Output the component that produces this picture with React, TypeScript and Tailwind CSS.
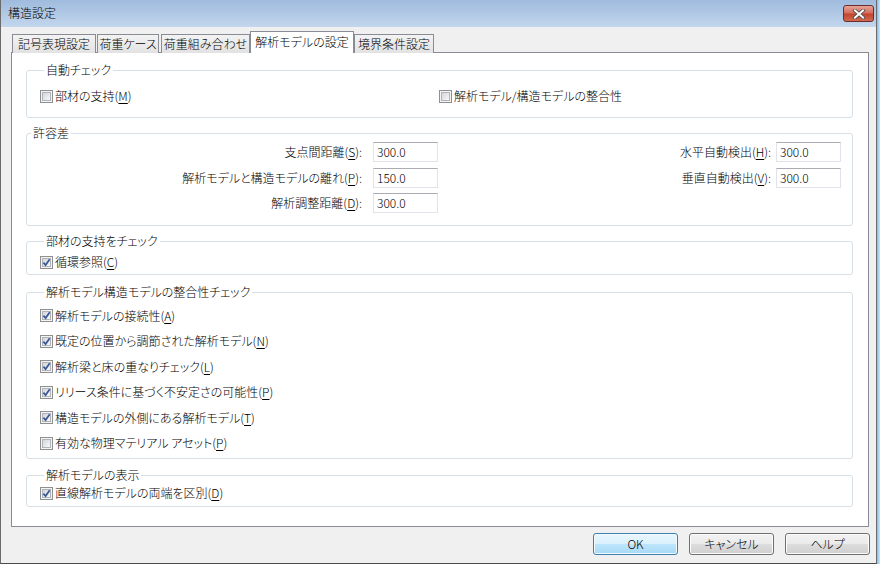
import type { ReactNode } from 'react';

function CheckBox({ checked }: { checked?: boolean }) {
  return (
    <span className="flex h-[13px] w-[13px] shrink-0 items-center justify-center border border-[#8e8f8f] bg-[#f4f4f4] p-px">
      <span className="relative flex h-full w-full border border-[#b0b4ba] bg-gradient-to-br from-[#d3d6da] to-[#f8f8f8]">
        {checked && (
          <svg viewBox="0 0 9 9" className="absolute -left-px -top-px h-[9px] w-[9px]">
            <path d="M1.4 4.6 L3.6 7.1 L7.7 1.3" fill="none" stroke="#3a5894" strokeWidth="1.7" />
          </svg>
        )}
      </span>
    </span>
  );
}

function K({ c }: { c: string }) {
  return <span className="underline underline-offset-[2px]">{c}</span>;
}

function Check({ checked, children }: { checked?: boolean; children: ReactNode }) {
  return (
    <div className="flex h-[16px] items-center gap-[2px]">
      <CheckBox checked={checked} />
      <span className="leading-[16px]">{children}</span>
    </div>
  );
}

function Group({ title, className, children }: { title: string; className: string; children: ReactNode }) {
  return (
    <fieldset className={`min-w-0 rounded-[3px] border border-[#d5dfe5] ${className}`}>
      <legend className="ml-[4px] px-[2px] leading-[14px]">{title}</legend>
      {children}
    </fieldset>
  );
}

function Field({ value }: { value: string }) {
  return (
    <div className="flex h-[20px] w-[65px] items-center border border-[#e2e3ea] border-t-[#abadb3] bg-white pl-[3px] leading-none">
      {value}
    </div>
  );
}

function Button({ primary, children }: { primary?: boolean; children: ReactNode }) {
  return (
    <div
      className={
        primary
          ? 'h-[22px] w-[85px] rounded-[3px] border border-[#3c7fb1] bg-[linear-gradient(#eaf6fd_0%,#d9f0fc_50%,#bee6fd_50%,#a7d9f5_100%)] text-center leading-[20px] shadow-[inset_0_0_0_1px_#f4fbff]'
          : 'h-[22px] w-[85px] rounded-[3px] border border-[#707070] bg-[linear-gradient(#f2f2f2_0%,#ebebeb_50%,#dddddd_50%,#cfcfcf_100%)] text-center leading-[20px] shadow-[inset_0_0_0_1px_#fcfcfc]'
      }
    >
      {children}
    </div>
  );
}

const tabs = [
  { name: '記号表現設定', w: 'ml-[11px] w-[84px]' },
  { name: '荷重ケース', w: 'ml-[1px] w-[62px]' },
  { name: '荷重組み合わせ', w: 'ml-[2px] w-[89px]' },
  { name: '解析モデルの設定', w: 'w-[104px]', active: true },
  { name: '境界条件設定', w: 'w-[80px]' },
];

const integrity = [
  { label: '解析モデルの接続性', key: 'A', checked: true },
  { label: '既定の位置から調節された解析モデル', key: 'N', checked: true },
  { label: '解析梁と床の重なりチェック', key: 'L', checked: true },
  { label: 'リリース条件に基づく不安定さの可能性', key: 'P', checked: true },
  { label: '構造モデルの外側にある解析モデル', key: 'T', checked: true },
  { label: '有効な物理マテリアル アセット', key: 'P', checked: false },
];

export default function App() {
  return (
    <div className="flex h-[564px] w-[880px] font-['Noto_Sans_CJK_JP',sans-serif] text-[12px] font-light text-black [font-feature-settings:'palt']">
      <div className="flex w-[877px] flex-col border-x border-b border-x-[#6b6b6b] border-b-[#4a4a4a] bg-[#f0f0f0]">
        {/* title bar */}
        <div className="flex h-[27px] shrink-0 items-start justify-between bg-gradient-to-b from-[#9fbbdd] to-[#c3d6ed]">
          <span className="pl-[7px] pt-[5px] leading-[16px]">構造設定</span>
          <div className="mr-[2px] mt-[5px] flex h-[17px] w-[31px] items-center justify-center rounded-[3px] border border-[#6e2b2b] bg-[linear-gradient(#e8a497_0%,#d3705f_45%,#c2452f_55%,#cf6a50_100%)]">
            <svg viewBox="0 0 14 10" className="h-[10px] w-[14px]">
              <path d="M3 1.5 L11 8.5 M11 1.5 L3 8.5" stroke="#4a4a4a" strokeWidth="3.6" strokeLinecap="square" />
              <path d="M3 1.5 L11 8.5 M11 1.5 L3 8.5" stroke="#ffffff" strokeWidth="2" strokeLinecap="square" />
            </svg>
          </div>
        </div>

        {/* tabs */}
        <div className="relative z-10 mt-[4px] -mb-px flex h-[22px] shrink-0 items-end">
          {tabs.map((t) =>
            t.active ? (
              <div
                key={t.name}
                className={`${t.w} h-[22px] border border-b-0 border-[#898c95] bg-white text-center leading-[19px]`}
              >
                {t.name}
              </div>
            ) : (
              <div
                key={t.name}
                className={`${t.w} h-[19px] border border-b-0 border-[#898c95] bg-gradient-to-b from-[#f3f3f3] to-[#e2e2e2] text-center leading-[18px]`}
              >
                {t.name}
              </div>
            ),
          )}
        </div>

        {/* tab panel */}
        <div className="ml-[10px] mr-[7px] h-[475px] shrink-0 border border-[#898c95] bg-white pl-[14px] pr-[15px] pt-[10px]">
          <Group title="自動チェック" className="pb-[13px] pl-[13px] pt-[11px]">
            <div className="flex">
              <div className="w-[399px]">
                <Check>
                  部材の支持(<K c="M" />)
                </Check>
              </div>
              <Check>解析モデル/構造モデルの整合性</Check>
            </div>
          </Group>

          <Group title="許容差" className="mt-[8px] pb-[12px] pt-[2px]">
            <div className="flex items-start">
              <div className="grid grid-cols-[335px_65px] gap-x-[11px] gap-y-[5.5px]">
                <span className="self-center text-right">
                  支点間距離(<K c="S" />):
                </span>
                <Field value="300.0" />
                <span className="self-center text-right">
                  解析モデルと構造モデルの離れ(<K c="P" />):
                </span>
                <Field value="150.0" />
                <span className="self-center text-right">
                  解析調整距離(<K c="D" />):
                </span>
                <Field value="300.0" />
              </div>
              <div className="ml-auto mr-[11px] grid grid-cols-[auto_65px] gap-x-[5px] gap-y-[6px]">
                <span className="self-center text-right">
                  水平自動検出(<K c="H" />):
                </span>
                <Field value="300.0" />
                <span className="self-center text-right">
                  垂直自動検出(<K c="V" />):
                </span>
                <Field value="300.0" />
              </div>
            </div>
          </Group>

          <Group title="部材の支持をチェック" className="mt-[8px] pb-[4px] pl-[13px] pt-[6px]">
            <Check checked>
              循環参照(<K c="C" />)
            </Check>
          </Group>

          <Group title="解析モデル構造モデルの整合性チェック" className="mt-[10px] pb-[2px] pl-[13px] pt-[4px]">
            {integrity.map((item) => (
              <div key={item.label} className="flex h-[25.5px] items-center">
                <Check checked={item.checked}>
                  {item.label}(<K c={item.key} />)
                </Check>
              </div>
            ))}
          </Group>

          <Group title="解析モデルの表示" className="mt-[9px] pb-[5px] pl-[13px] pt-[3px]">
            <Check checked>
              直線解析モデルの両端を区別(<K c="D" />)
            </Check>
          </Group>
        </div>

        {/* buttons */}
        <div className="mt-[6px] flex justify-end gap-[11px] pr-[6px]">
          <Button primary>OK</Button>
          <Button>キャンセル</Button>
          <Button>ヘルプ</Button>
        </div>
      </div>
      <div className="w-[3px] bg-gradient-to-r from-[#7fbde9] to-[#cfe6f8]" />
    </div>
  );
}
